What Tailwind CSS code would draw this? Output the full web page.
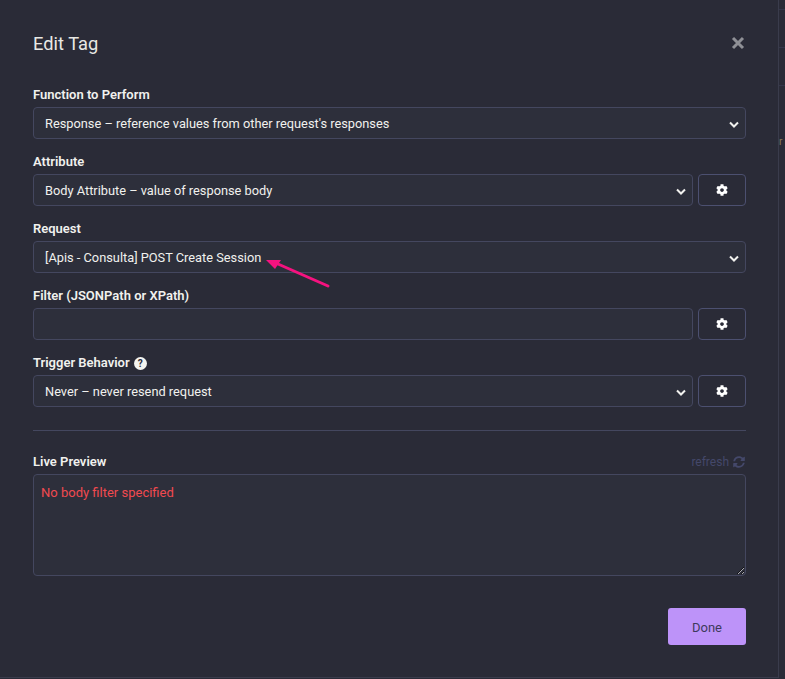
<!DOCTYPE html>
<html lang="en">
<head>
  <meta charset="UTF-8">
  <meta name="viewport" content="width=device-width, initial-scale=1.0">
  <title>Edit Tag</title>
  <script src="https://cdn.jsdelivr.net/npm/@tailwindcss/browser@4"></script>
</head>
<body class="bg-[#2a2b37] font-['Roboto','Noto_Sans',sans-serif] text-[13px] leading-[18px] text-[#f1f1ee]">
<div class="w-[785px] h-[679px] overflow-hidden flex">
  <!-- modal -->
  <div class="relative w-[779px] h-[678px] shrink-0 border-r border-b border-[#3a3c4c] pl-[33px] pr-[32px]">
    <div class="flex justify-between items-center h-[24px] mt-[31px]">
      <h2 class="mt-[2px] text-[18.3px] leading-[24px] text-[#e8e8e4]">Edit Tag</h2>
      <svg class="w-[14px] h-[14px] mr-[1px]" viewBox="0 0 14 14"><path d="M2 2l10 10M12 2L2 12" stroke="#8f9096" stroke-width="3" /></svg>
    </div>

    <label class="block font-semibold mt-[31px] mb-[3px]">Function to Perform</label>
    <div class="h-[32px] flex items-center justify-between pt-[2px] pl-[11px] pr-[3px] rounded-[4px] border border-[#44475f] bg-[#2d2f3b] text-[12.8px]">
      <span>Response – reference values from other request's responses</span>
      <svg class="w-[16px] h-[16px]" viewBox="0 0 16 16"><path d="M4 6.5l4 4 4-4" fill="none" stroke="#f1f1ee" stroke-width="2" /></svg>
    </div>

    <label class="block font-semibold mt-[14px] mb-[3px]">Attribute</label>
    <div class="flex gap-[5px]">
      <div class="flex-1 h-[32px] flex items-center justify-between pt-[2px] pl-[11px] pr-[3px] rounded-[4px] border border-[#44475f] bg-[#2d2f3b] text-[12.8px]">
        <span>Body Attribute – value of response body</span>
        <svg class="w-[16px] h-[16px]" viewBox="0 0 16 16"><path d="M4 6.5l4 4 4-4" fill="none" stroke="#f1f1ee" stroke-width="2" /></svg>
      </div>
      <button class="w-[48px] h-[32px] flex items-center justify-center rounded-[4px] border border-[#4c5070]">
        <svg class="w-[12px] h-[12px]" viewBox="0 0 512 512"><path fill="#fff" d="M487.4 315.7l-42.6-24.6c4.3-23.2 4.3-47 0-70.2l42.6-24.6c4.9-2.8 7.1-8.6 5.5-14-11.1-35.6-30-67.8-54.7-94.6-3.8-4.1-10-5.1-14.8-2.3L380.8 110c-17.9-15.4-38.5-27.3-60.8-35.1V25.8c0-5.6-3.9-10.5-9.4-11.7-36.7-8.2-74.3-7.8-109.2 0-5.5 1.2-9.4 6.1-9.4 11.7V75c-22.2 7.9-42.8 19.8-60.8 35.1L88.7 85.5c-4.9-2.8-11-1.9-14.8 2.3-24.7 26.7-43.6 58.9-54.7 94.6-1.7 5.4.6 11.2 5.5 14L67.3 221c-4.3 23.2-4.3 47 0 70.2l-42.6 24.6c-4.9 2.8-7.1 8.6-5.5 14 11.1 35.6 30 67.8 54.7 94.6 3.8 4.1 10 5.1 14.8 2.3l42.6-24.6c17.9 15.4 38.5 27.3 60.8 35.1v49.2c0 5.6 3.9 10.5 9.4 11.7 36.7 8.2 74.3 7.8 109.2 0 5.5-1.2 9.4-6.1 9.4-11.7v-49.2c22.2-7.9 42.8-19.8 60.8-35.1l42.6 24.6c4.9 2.8 11 1.9 14.8-2.3 24.7-26.7 43.6-58.9 54.7-94.6 1.5-5.5-.7-11.3-5.6-14.1zM256 336c-44.1 0-80-35.9-80-80s35.9-80 80-80 80 35.9 80 80-35.9 80-80 80z"/></svg>
      </button>
    </div>

    <label class="block font-semibold mt-[14px] mb-[3px]">Request</label>
    <div class="h-[32px] flex items-center justify-between pt-[2px] pl-[11px] pr-[3px] rounded-[4px] border border-[#44475f] bg-[#2d2f3b] text-[12.8px]">
      <span>[Apis - Consulta] POST Create Session</span>
      <svg class="w-[16px] h-[16px]" viewBox="0 0 16 16"><path d="M4 6.5l4 4 4-4" fill="none" stroke="#f1f1ee" stroke-width="2" /></svg>
    </div>

    <label class="block font-semibold mt-[14px] mb-[3px]">Filter (JSONPath or XPath)</label>
    <div class="flex gap-[5px]">
      <input class="flex-1 h-[32px] rounded-[4px] border border-[#44475f] bg-[#2d2f3b]" type="text">
      <button class="w-[48px] h-[32px] flex items-center justify-center rounded-[4px] border border-[#4c5070]">
        <svg class="w-[12px] h-[12px]" viewBox="0 0 512 512"><path fill="#fff" d="M487.4 315.7l-42.6-24.6c4.3-23.2 4.3-47 0-70.2l42.6-24.6c4.9-2.8 7.1-8.6 5.5-14-11.1-35.6-30-67.8-54.7-94.6-3.8-4.1-10-5.1-14.8-2.3L380.8 110c-17.9-15.4-38.5-27.3-60.8-35.1V25.8c0-5.6-3.9-10.5-9.4-11.7-36.7-8.2-74.3-7.8-109.2 0-5.5 1.2-9.4 6.1-9.4 11.7V75c-22.2 7.9-42.8 19.8-60.8 35.1L88.7 85.5c-4.9-2.8-11-1.9-14.8 2.3-24.7 26.7-43.6 58.9-54.7 94.6-1.7 5.4.6 11.2 5.5 14L67.3 221c-4.3 23.2-4.3 47 0 70.2l-42.6 24.6c-4.9 2.8-7.1 8.6-5.5 14 11.1 35.6 30 67.8 54.7 94.6 3.8 4.1 10 5.1 14.8 2.3l42.6-24.6c17.9 15.4 38.5 27.3 60.8 35.1v49.2c0 5.6 3.9 10.5 9.4 11.7 36.7 8.2 74.3 7.8 109.2 0 5.5-1.2 9.4-6.1 9.4-11.7v-49.2c22.2-7.9 42.8-19.8 60.8-35.1l42.6 24.6c4.9 2.8 11 1.9 14.8-2.3 24.7-26.7 43.6-58.9 54.7-94.6 1.5-5.5-.7-11.3-5.6-14.1zM256 336c-44.1 0-80-35.9-80-80s35.9-80 80-80 80 35.9 80 80-35.9 80-80 80z"/></svg>
      </button>
    </div>

    <label class="flex items-center gap-[4px] font-semibold mt-[14px] mb-[3px]">Trigger Behavior
      <span class="w-[13px] h-[13px] rounded-full bg-[#f4f4f0] text-[#2a2b37] text-[10px] leading-[13px] font-bold text-center">?</span>
    </label>
    <div class="flex gap-[5px]">
      <div class="flex-1 h-[32px] flex items-center justify-between pt-[2px] pl-[11px] pr-[3px] rounded-[4px] border border-[#44475f] bg-[#2d2f3b] text-[12.8px]">
        <span>Never – never resend request</span>
        <svg class="w-[16px] h-[16px]" viewBox="0 0 16 16"><path d="M4 6.5l4 4 4-4" fill="none" stroke="#f1f1ee" stroke-width="2" /></svg>
      </div>
      <button class="w-[48px] h-[32px] flex items-center justify-center rounded-[4px] border border-[#4c5070]">
        <svg class="w-[12px] h-[12px]" viewBox="0 0 512 512"><path fill="#fff" d="M487.4 315.7l-42.6-24.6c4.3-23.2 4.3-47 0-70.2l42.6-24.6c4.9-2.8 7.1-8.6 5.5-14-11.1-35.6-30-67.8-54.7-94.6-3.8-4.1-10-5.1-14.8-2.3L380.8 110c-17.9-15.4-38.5-27.3-60.8-35.1V25.8c0-5.6-3.9-10.5-9.4-11.7-36.7-8.2-74.3-7.8-109.2 0-5.5 1.2-9.4 6.1-9.4 11.7V75c-22.2 7.9-42.8 19.8-60.8 35.1L88.7 85.5c-4.9-2.8-11-1.9-14.8 2.3-24.7 26.7-43.6 58.9-54.7 94.6-1.7 5.4.6 11.2 5.5 14L67.3 221c-4.3 23.2-4.3 47 0 70.2l-42.6 24.6c-4.9 2.8-7.1 8.6-5.5 14 11.1 35.6 30 67.8 54.7 94.6 3.8 4.1 10 5.1 14.8 2.3l42.6-24.6c17.9 15.4 38.5 27.3 60.8 35.1v49.2c0 5.6 3.9 10.5 9.4 11.7 36.7 8.2 74.3 7.8 109.2 0 5.5-1.2 9.4-6.1 9.4-11.7v-49.2c22.2-7.9 42.8-19.8 60.8-35.1l42.6 24.6c4.9 2.8 11 1.9 14.8-2.3 24.7-26.7 43.6-58.9 54.7-94.6 1.5-5.5-.7-11.3-5.6-14.1zM256 336c-44.1 0-80-35.9-80-80s35.9-80 80-80 80 35.9 80 80-35.9 80-80 80z"/></svg>
      </button>
    </div>

    <hr class="mt-[23px] border-[#44475f]">

    <div class="flex justify-between items-end mt-[22px] mb-[3px]">
      <label class="font-semibold">Live Preview</label>
      <span class="flex items-center gap-[4px] text-[12px] text-[#44486a]">refresh
        <svg class="w-[12px] h-[12px] mr-[1px]" viewBox="0 0 512 512"><path fill="#44486a" d="M370.72 133.28C339.458 104.008 298.888 87.962 255.848 88c-77.458.068-144.328 53.178-162.791 126.85-1.344 5.363-6.122 9.15-11.651 9.15H24.103c-7.498 0-13.194-6.807-11.807-14.176C33.933 94.924 134.813 8 256 8c66.448 0 126.791 26.136 171.315 68.685L463.03 40.97C478.149 25.851 504 36.559 504 57.941V192c0 13.255-10.745 24-24 24H345.941c-21.382 0-32.09-25.851-16.971-40.971l41.75-41.749zM32 296h134.059c21.382 0 32.09 25.851 16.971 40.971l-41.75 41.75c31.262 29.273 71.835 45.319 114.876 45.28 77.418-.07 144.315-53.144 162.787-126.849 1.344-5.363 6.122-9.15 11.651-9.15h57.304c7.498 0 13.194 6.807 11.807 14.176C478.067 417.076 377.187 504 256 504c-66.448 0-126.791-26.136-171.315-68.685L48.97 471.03C33.851 486.149 8 475.441 8 454.059V320c0-13.255 10.745-24 24-24z"/></svg>
      </span>
    </div>
    <textarea class="block w-full h-[102px] px-[7px] py-[9px] rounded-[4px] border border-[#44475f] bg-[#2d2f3b] text-[#f14a50]" readonly>No body filter specified</textarea>

    <div class="flex justify-end mt-[32px]">
      <button class="w-[78px] h-[37px] pt-[2px] rounded-[3px] bg-[#bd93f9] text-[#3d3a5c]">Done</button>
    </div>

    <!-- annotation arrow drawn over the screenshot -->
    <svg class="absolute left-[260px] top-[255px] w-[75px] h-[36px]" viewBox="0 0 75 36">
      <path d="M68 31L18 9" stroke="#f5127f" stroke-width="3" stroke-linecap="round"/>
      <path d="M6 5L21 5L15 14Z" fill="#f5127f"/>
    </svg>
  </div>
  <!-- sliver of the app behind the modal -->
  <div class="flex-1 flex flex-col pt-[9px] text-[#3a3c4c]">
    <div class="h-px bg-[#34364a] mb-[37px]"></div>
    <div class="h-px bg-[#34364a] mb-[37px]"></div>
    <div class="h-px bg-[#34364a] mb-[50px]"></div>
    <span class="text-[10px] leading-[12px] text-[#8a7d5a]">r</span>
  </div>
</div>
</body>
</html>
